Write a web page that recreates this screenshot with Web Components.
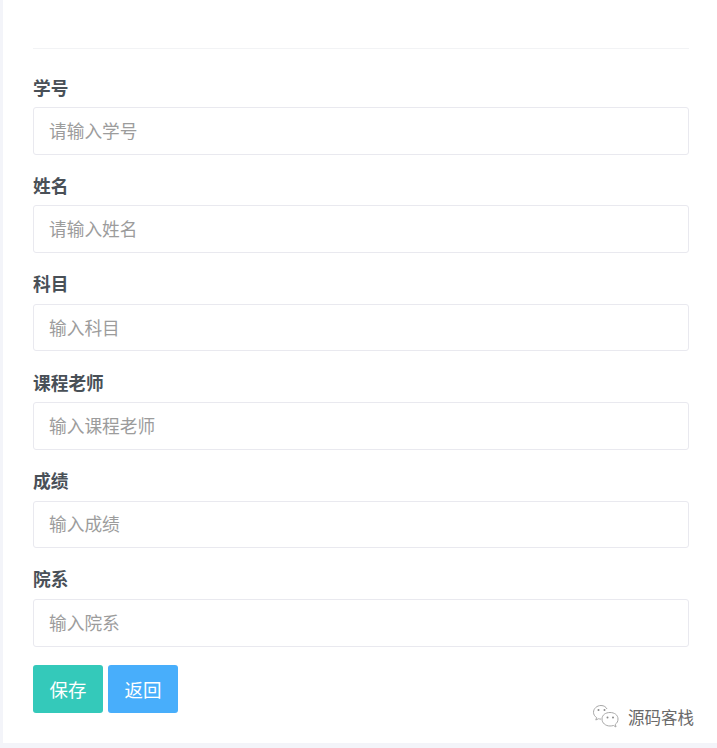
<!DOCTYPE html>
<html lang="zh">
<head>
<meta charset="utf-8">
<title>成绩录入</title>
<style>
  html, body { margin: 0; padding: 0; background: #f3f4f9; }
  body { font-family: "Noto Sans CJK SC", "Noto Sans", sans-serif; overflow: hidden; }
</style>
</head>
<body>
<form-card>
  <form-field label="学号">请输入学号</form-field>
  <form-field label="姓名">请输入姓名</form-field>
  <form-field label="科目">输入科目</form-field>
  <form-field label="课程老师">输入课程老师</form-field>
  <form-field label="成绩">输入成绩</form-field>
  <form-field label="院系">输入院系</form-field>
  <form-actions>
    <form-button color="#34c9ba">保存</form-button>
    <form-button color="#48aefb">返回</form-button>
  </form-actions>
</form-card>
<water-mark>源码客栈</water-mark>

<script>
//Card holding the divider and the form rows
class formCard extends HTMLElement {
  constructor() {
    super();
    this._root = this.attachShadow({ mode: "open" });
  }
  connectedCallback() {
    this._root.innerHTML = `
    <style>
      :host {
        display: block;
        box-sizing: border-box;
        margin-left: 3px;
        height: 743px;
        padding: 48px 28px 0 30px;
        background: #fff;
      }
      hr {
        margin: 0 0 23.5px;
        border: 0;
        border-top: 1px solid #f2f3f5;
      }
    </style>
    <hr>
    <slot></slot>`;
  }
}
customElements.define("form-card", formCard);

//Label + input box
class formField extends HTMLElement {
  constructor() {
    super();
    this._root = this.attachShadow({ mode: "open" });
  }
  connectedCallback() {
    this._root.innerHTML = `
    <style>
      :host {
        display: block;
        height: 98.4px;
        font-size: 17.7px;
      }
      label {
        display: block;
        height: 34.5px;
        line-height: 29px;
        font-weight: 700;
        color: #495057;
      }
      .box {
        box-sizing: border-box;
        height: 47.6px;
        padding: 0 15px 2px;
        display: flex;
        align-items: center;
        border: 1px solid #e9e9ef;
        border-radius: 3px;
        background: #fff;
        color: #9c9c9c;
      }
    </style>
    <label>${this.getAttribute("label")}</label>
    <div class="box" role="textbox"><slot></slot></div>`;
  }
}
customElements.define("form-field", formField);

//Row of buttons
class formActions extends HTMLElement {
  constructor() {
    super();
    this._root = this.attachShadow({ mode: "open" });
  }
  connectedCallback() {
    this._root.innerHTML = `
    <style>
      :host {
        display: flex;
        gap: 5px;
        margin-top: 2.6px;
      }
    </style>
    <slot></slot>`;
  }
}
customElements.define("form-actions", formActions);

class formButton extends HTMLElement {
  constructor() {
    super();
    this._root = this.attachShadow({ mode: "open" });
  }
  connectedCallback() {
    this._root.innerHTML = `
    <style>
      :host {
        display: flex;
        align-items: center;
        justify-content: center;
        width: 70px;
        height: 48px;
        padding-bottom: 1px;
        box-sizing: border-box;
        border-radius: 3px;
        font-size: 18.5px;
        color: #fff;
        background: ${this.getAttribute("color")};
      }
    </style>
    <slot></slot>`;
  }
}
customElements.define("form-button", formButton);

//WeChat mark laid over the bottom right corner
class waterMark extends HTMLElement {
  constructor() {
    super();
    this._root = this.attachShadow({ mode: "open" });
  }
  connectedCallback() {
    this._root.innerHTML = `
    <style>
      :host {
        position: absolute;
        left: 592px;
        top: 704px;
        display: flex;
        align-items: center;
        gap: 8px;
        font-size: 16.5px;
        color: #6a6a6a;
      }
      svg { display: block; }
    </style>
    <svg width="28" height="25" viewBox="0 0 28 25" fill="none" stroke="#a8a8a8" stroke-width="1">
      <path d="M15 5C14 3 12 1.500 9 1.500C5 1.500 1.500 4.500 1.500 8.300C1.500 10.500 2.700 12.300 4.600 13.600L3.800 16L6.600 14.700C7.500 15 8 15.100 9 15.100"/>
      <path d="M18 8.500C22.500 8.500 26 11 26 15C26 17.500 25 19 23.300 20.300L24 23L21.500 21.500C20.400 21.800 19.200 22 18 22C13.500 22 10 19 10 15C10 11 13.500 8.500 18 8.500Z"/>
      <circle cx="6.500" cy="6" r="1" fill="#8a8a8a" stroke="none"/>
      <circle cx="12.500" cy="6" r="1" fill="#8a8a8a" stroke="none"/>
      <circle cx="15.500" cy="13.500" r="1" fill="#8a8a8a" stroke="none"/>
      <circle cx="21" cy="13.500" r="1" fill="#8a8a8a" stroke="none"/>
    </svg>
    <slot></slot>`;
  }
}
customElements.define("water-mark", waterMark);
</script>
</body>
</html>
